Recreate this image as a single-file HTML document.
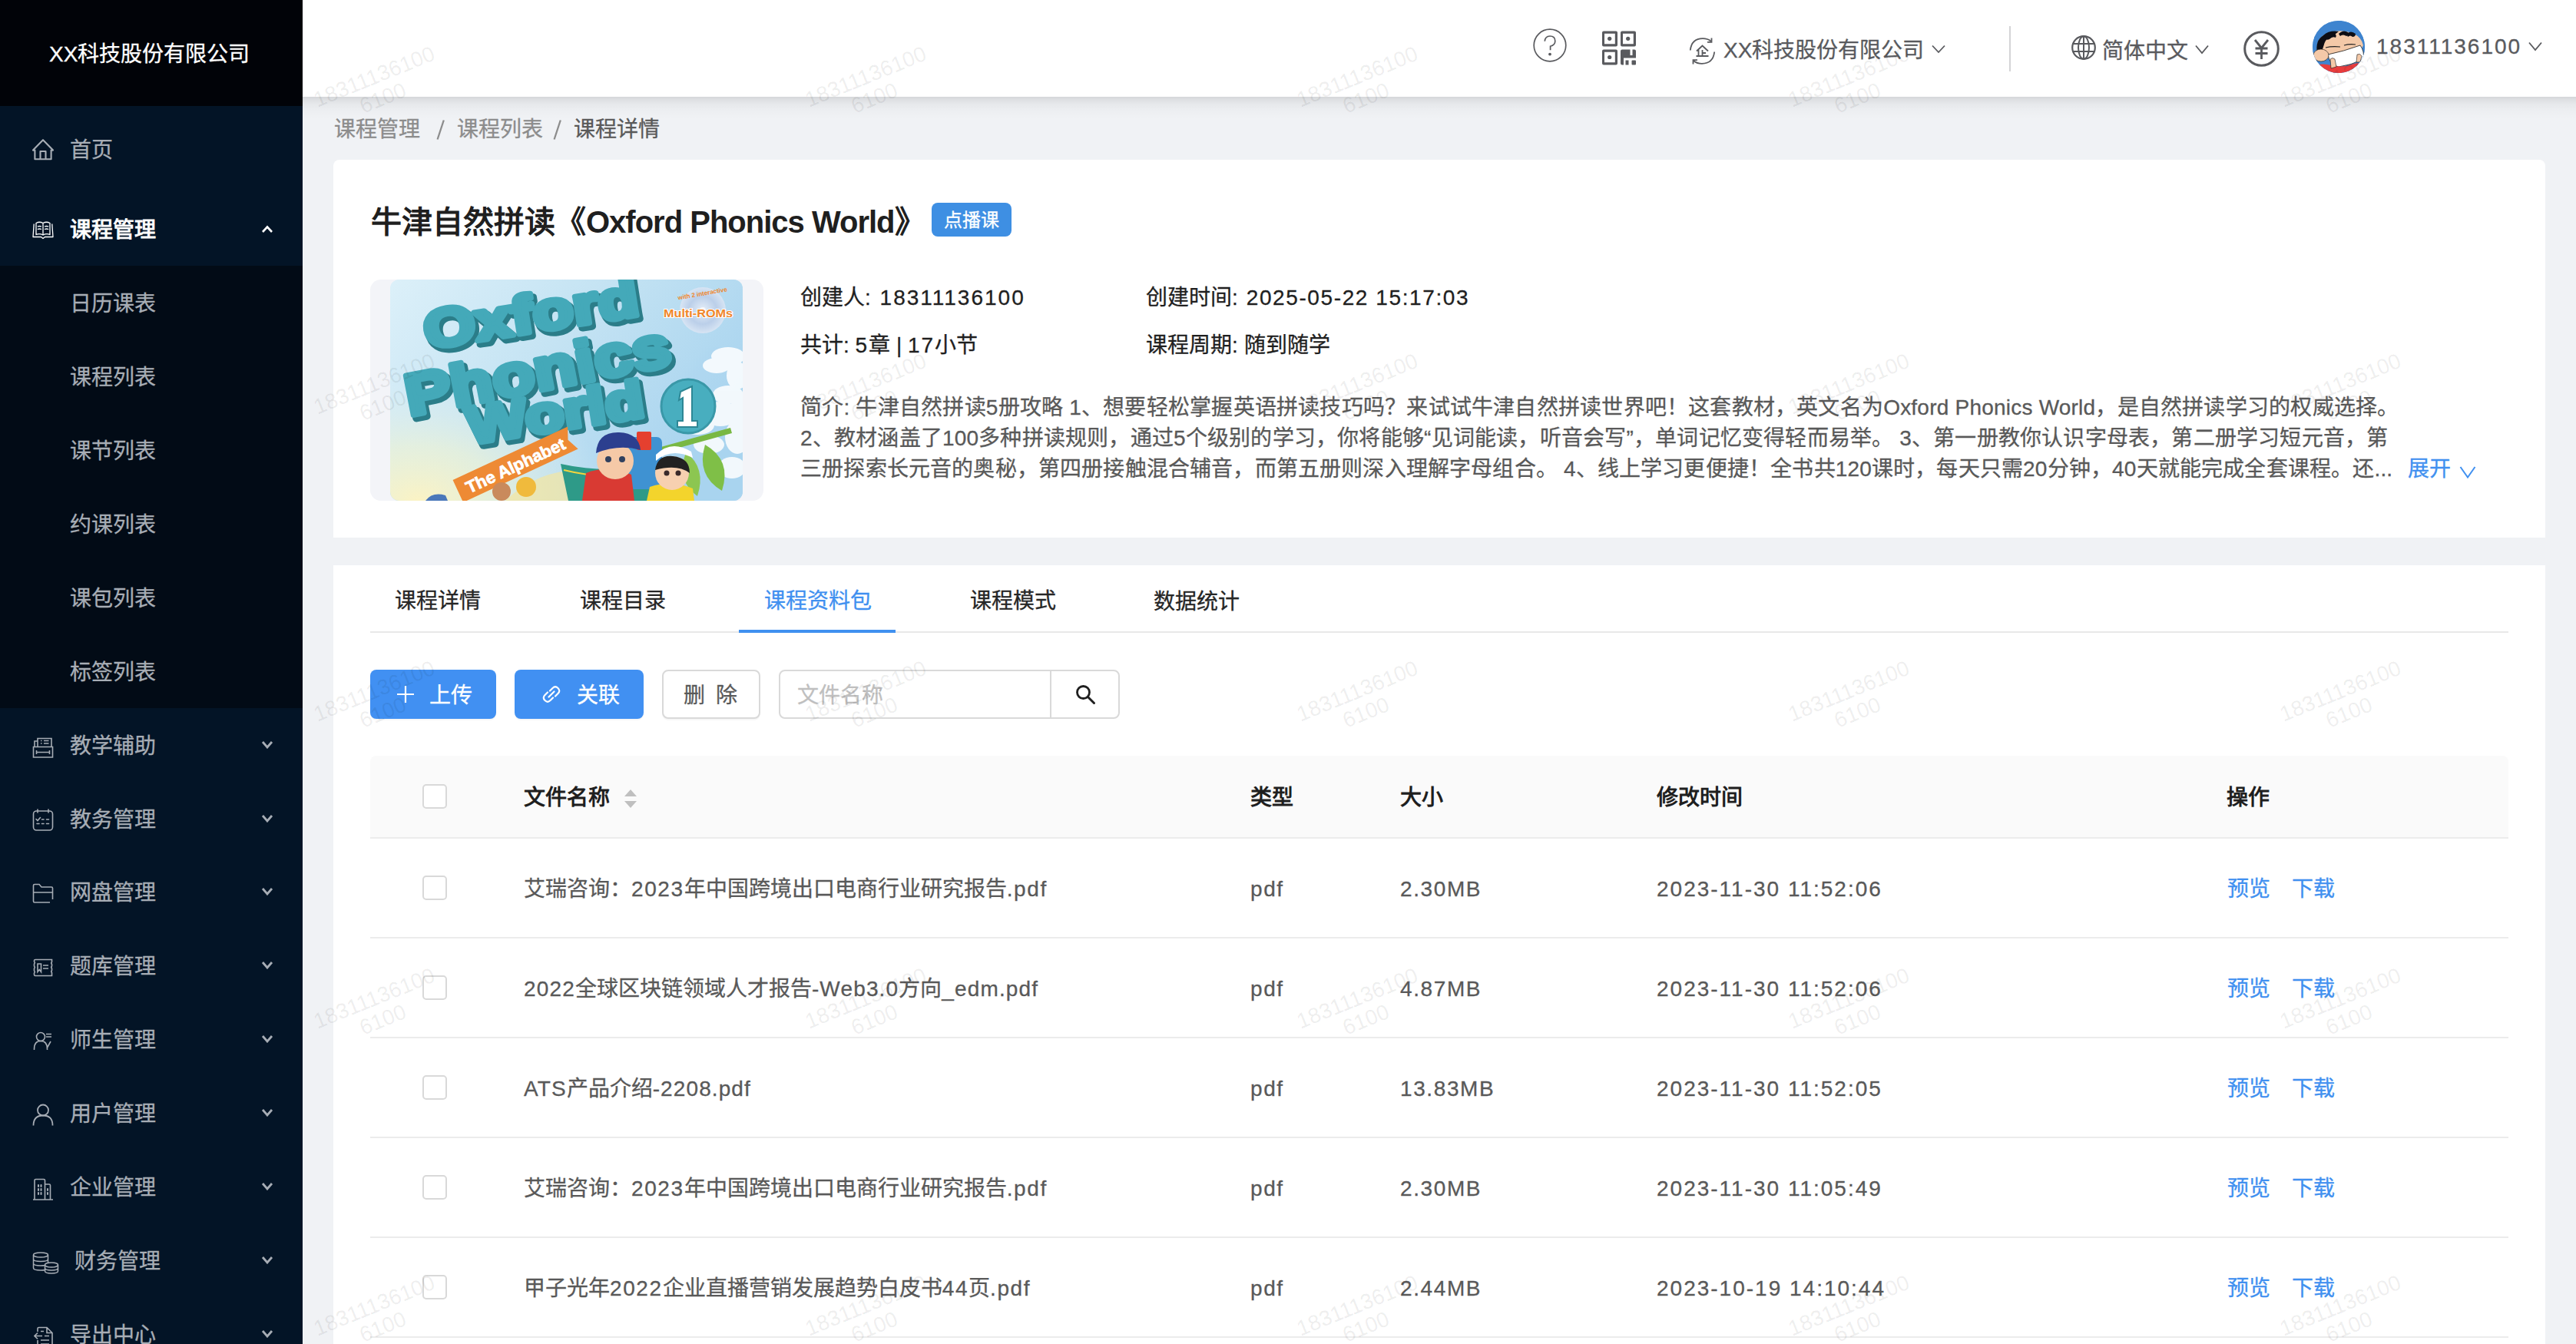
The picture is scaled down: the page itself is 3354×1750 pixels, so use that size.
<!DOCTYPE html>
<html lang="zh-CN"><head><meta charset="utf-8">
<style>
*{box-sizing:border-box;margin:0;padding:0}
html,body{width:3354px;height:1750px;overflow:hidden}
body{background:#f0f2f5;font-family:"Liberation Sans",sans-serif;position:relative;color:#1f1f1f;-webkit-text-stroke:0.3px currentColor}
.a{position:absolute;white-space:nowrap}
#side{left:0;top:0;width:394px;height:1750px;background:#031426}
#logo{left:0;top:0;width:394px;height:138px;background:#010308}
.mi{left:0;width:394px;height:96px;color:#a7adb5;font-size:28px}
.mi .t{position:absolute;left:91px;top:2px;line-height:96px}
.mi svg{position:absolute;left:42px;top:34px}
.mi .ch{position:absolute;left:340px;top:42px}
#sub{left:0;top:346px;width:394px;height:576px;background:#020b16}
#hdr{left:394px;top:0;width:2960px;height:126px;background:#fff}
#hsh{left:394px;top:126px;width:2960px;height:30px;background:linear-gradient(rgba(0,0,0,.115) 0px,rgba(0,0,0,.075) 4px,rgba(0,0,0,.045) 9px,rgba(0,0,0,.02) 16px,rgba(0,0,0,.006) 23px,rgba(0,0,0,0) 30px)}
.card{background:#fff;border-radius:10px}
.btn{border-radius:8px;font-size:28px;box-shadow:0 2px 0 rgba(0,0,0,.03)}
.cb{width:32px;height:32px;border:2px solid #d9d9d9;border-radius:5px;background:#fff}
.th{font-size:28px;line-height:40px;font-weight:bold;color:#1f1f1f;-webkit-text-stroke:0}
.wm{position:absolute;width:200px;height:60px;text-align:center;font-size:28px;line-height:30px;color:rgba(0,0,0,.075);transform:rotate(-22deg)}
.bc{font-size:28px;line-height:40px;color:#8c8c8c}
.n{letter-spacing:2px}
.dsc{font-size:28px;line-height:40px;color:#595959}
.m{letter-spacing:1.6px}
.td{font-size:28px;line-height:40px;color:#595959}
</style></head>
<body>
<div id="side" class="a">
  <div id="logo" class="a"><div class="a" style="left:64px;top:51px;font-size:28px;color:#fff;line-height:40px">XX科技股份有限公司</div></div>
  <div class="a mi" style="top:146px"><div class="t">首页</div>
    <svg width="28" height="28" viewBox="0 0 28 28" style="top:35px"><path d="M1 14.6L14 1.2L27 14.6H24.6V26.2H3.4V14.6Z M10.5 26V16H17.5V26" stroke="currentColor" fill="none" stroke-width="2.1" stroke-linejoin="round"/></svg>
  </div>
  <div class="a mi" style="top:250px;color:#fff"><div class="t" style="-webkit-text-stroke:1px #fff">课程管理</div>
    <svg width="28" height="26" viewBox="0 0 28 26" style="top:37px;left:42px"><path d="M2.2 4.5L1 21.5H11.5L14 23.5L16.5 21.5H27L25.8 4.5 M5 3.5Q9.5 1 14 3.5Q18.5 1 23 3.5V18.5Q18.5 16.5 14 19Q9.5 16.5 5 18.5Z M14 3.5V19 M6.8 8Q9.5 7 12 8 M6.8 11.5Q9.5 10.5 12 11.5 M16 8Q18.5 7 21.2 8 M16 11.5Q18.5 10.5 21.2 11.5" stroke="currentColor" fill="none" stroke-width="1.3" stroke-linejoin="round"/></svg>
    <svg class="ch" width="16" height="11" viewBox="0 0 16 11" style="top:43px"><path d="M2 9L8 2.5L14 9" stroke="currentColor" fill="none" stroke-width="2.6"/></svg>
  </div>
  <div id="sub" class="a">
    <div class="a mi" style="top:0"><div class="t">日历课表</div></div>
    <div class="a mi" style="top:96px"><div class="t">课程列表</div></div>
    <div class="a mi" style="top:192px"><div class="t">课节列表</div></div>
    <div class="a mi" style="top:288px"><div class="t">约课列表</div></div>
    <div class="a mi" style="top:384px"><div class="t">课包列表</div></div>
    <div class="a mi" style="top:480px"><div class="t">标签列表</div></div>
  </div>
  <div class="a mi" style="top:922px"><div class="t">教学辅助</div>
    <svg width="28" height="28" viewBox="0 0 28 28" style="top:37px"><path d="M1.5 13.5H26.5V27H1.5ZM3 13.5V6H7M7 13.5V2.5H25V13.5M5.5 20.5H22.5M5.5 18V23M22.5 18V23M11 5.5H12.5M11 9H12.5M15 5.5H21.5M15 9H21.5" stroke="currentColor" fill="none" stroke-width="1.6"/></svg>
    <svg class="ch" width="16" height="11" viewBox="0 0 16 11"><path d="M2 2L8 9L14 2" stroke="currentColor" fill="none" stroke-width="2.8"/></svg>
  </div>
  <div class="a mi" style="top:1018px"><div class="t">教务管理</div>
    <svg width="28" height="30" viewBox="0 0 28 30" style="top:35px"><rect x="1.5" y="3" width="25" height="25" rx="4" stroke="currentColor" fill="none" stroke-width="1.6"/><path d="M7 1V5M21 1V5M5 13.5L7 15.5L10.5 11.5M12.5 14H15M18.5 14H21.5M6 19.5H9M12.5 19.5H15M18.5 19.5H21.5" stroke="currentColor" fill="none" stroke-width="1.6" stroke-linecap="round"/></svg>
    <svg class="ch" width="16" height="11" viewBox="0 0 16 11"><path d="M2 2L8 9L14 2" stroke="currentColor" fill="none" stroke-width="2.8"/></svg>
  </div>
  <div class="a mi" style="top:1113px"><div class="t">网盘管理</div>
    <svg width="28" height="26" viewBox="0 0 28 26" style="top:37px"><path d="M23 25H3Q1.5 25 1.5 23.5V3Q1.5 1.5 3 1.5H9L12 5H25Q26.5 5 26.5 6.5V21M1.5 12H26.5" stroke="currentColor" fill="none" stroke-width="1.6"/></svg>
    <svg class="ch" width="16" height="11" viewBox="0 0 16 11"><path d="M2 2L8 9L14 2" stroke="currentColor" fill="none" stroke-width="2.8"/></svg>
  </div>
  <div class="a mi" style="top:1209px"><div class="t">题库管理</div>
    <svg width="26" height="24" viewBox="0 0 26 24" style="top:39px;left:43px"><path d="M3 1.5H24.5V4.5Q23 6 24.5 7.5V10Q23 11.5 24.5 13V15.5Q23 17 24.5 18.5V22.5H3Q1.5 22.5 1.5 21V19Q3 17.5 1.5 16V13Q3 11.5 1.5 10V7Q3 5.5 1.5 4V3Q1.5 1.5 3 1.5ZM6 7H10.5V17.5L8.3 14.5L6 17.5ZM13 9H20M13 13H20" stroke="currentColor" fill="none" stroke-width="1.6"/></svg>
    <svg class="ch" width="16" height="11" viewBox="0 0 16 11"><path d="M2 2L8 9L14 2" stroke="currentColor" fill="none" stroke-width="2.8"/></svg>
  </div>
  <div class="a mi" style="top:1305px"><div class="t">师生管理</div>
    <svg width="26" height="26" viewBox="0 0 26 26" style="top:38px;left:43px"><circle cx="10" cy="7" r="5.5" stroke="currentColor" fill="none" stroke-width="1.6"/><path d="M1.5 24V23Q1.5 12.5 10 12.5Q18.5 12.5 18.5 23V24M18.5 21L23 13M17 3.5H24M17 7H24" stroke="currentColor" fill="none" stroke-width="1.6"/></svg>
    <svg class="ch" width="16" height="11" viewBox="0 0 16 11"><path d="M2 2L8 9L14 2" stroke="currentColor" fill="none" stroke-width="2.8"/></svg>
  </div>
  <div class="a mi" style="top:1401px"><div class="t">用户管理</div>
    <svg width="28" height="30" viewBox="0 0 28 30" style="top:36px"><circle cx="14" cy="8.5" r="7" stroke="currentColor" fill="none" stroke-width="1.8"/><path d="M1.5 28.5Q1.5 15.5 14 15.5Q26.5 15.5 26.5 28.5" stroke="currentColor" fill="none" stroke-width="1.8"/></svg>
    <svg class="ch" width="16" height="11" viewBox="0 0 16 11"><path d="M2 2L8 9L14 2" stroke="currentColor" fill="none" stroke-width="2.8"/></svg>
  </div>
  <div class="a mi" style="top:1497px"><div class="t">企业管理</div>
    <svg width="28" height="30" viewBox="0 0 28 30" style="top:37px"><path d="M1 28H27M3 28V3Q3 1.5 4.5 1.5H15Q16.5 1.5 16.5 3V28M16.5 8H22Q23.5 8 23.5 9.5V28" stroke="currentColor" fill="none" stroke-width="1.6"/><path d="M8 9V11M11.5 9V11M8 14V16M11.5 14V16M8 19V21M11.5 19V21M20 14V16M20 19V21" stroke="currentColor" fill="none" stroke-width="2" stroke-linecap="round"/></svg>
    <svg class="ch" width="16" height="11" viewBox="0 0 16 11"><path d="M2 2L8 9L14 2" stroke="currentColor" fill="none" stroke-width="2.8"/></svg>
  </div>
  <div class="a mi" style="top:1593px"><div class="t" style="left:97px">财务管理</div>
    <svg width="35" height="29" viewBox="0 0 35 29" style="top:37px"><ellipse cx="11" cy="4" rx="9.5" ry="3" stroke="currentColor" fill="none" stroke-width="1.5"/><path d="M1.5 4V21Q1.5 24 11 24Q15 24 16.5 23.5M1.5 9.5Q1.5 12.5 11 12.5Q20.5 12.5 20.5 9.5M1.5 15Q1.5 18 11 18Q15 18 16.5 17.5M20.5 4V15" stroke="currentColor" fill="none" stroke-width="1.5"/><ellipse cx="25" cy="17" rx="8.5" ry="3" stroke="currentColor" fill="none" stroke-width="1.5"/><path d="M16.5 17V25Q16.5 28 25 28Q33.5 28 33.5 25V17M16.5 21Q16.5 24 25 24Q33.5 24 33.5 21" stroke="currentColor" fill="none" stroke-width="1.5"/></svg>
    <svg class="ch" width="16" height="11" viewBox="0 0 16 11"><path d="M2 2L8 9L14 2" stroke="currentColor" fill="none" stroke-width="2.8"/></svg>
  </div>
  <div class="a mi" style="top:1689px"><div class="t">导出中心</div>
    <svg width="26" height="30" viewBox="0 0 26 30" style="top:38px;left:44px"><path d="M5 7V3Q5 1.5 6.5 1.5H17L24 8.5V28Q24 29.5 22.5 29.5H6.5Q5 29.5 5 28V18M17 1.5V8.5H24M1 12.5H11M5 8.5L1 12.5L5 16.5M9 6.5H13M14 12.5H20M9 18H20M9 23H20" stroke="currentColor" fill="none" stroke-width="1.6"/></svg>
    <svg class="ch" width="16" height="11" viewBox="0 0 16 11"><path d="M2 2L8 9L14 2" stroke="currentColor" fill="none" stroke-width="2.8"/></svg>
  </div>
</div>
<div id="hdr" class="a">
  <svg class="a" style="left:1602px;top:37px" width="44" height="44" viewBox="0 0 44 44"><circle cx="22" cy="22" r="20.8" stroke="#595a5e" fill="none" stroke-width="1.7"/><path d="M15.3 16.8Q15.8 10 22 10Q28.8 10 28.8 16.4Q28.8 21.6 22.6 23.2V28.2" stroke="#595a5e" fill="none" stroke-width="1.7"/><circle cx="22" cy="33.6" r="1.9" fill="#595a5e"/></svg>
  <svg class="a" style="left:1691px;top:40px" width="45" height="45" viewBox="0 0 45 45" fill="#595a5e"><path fill-rule="evenodd" d="M1 2.5Q1 0.5 3 0.5H19Q21 0.5 21 2.5V18.5Q21 20.5 19 20.5H3Q1 20.5 1 18.5ZM4 3.8V17.2H17.8V3.8Z"/><circle cx="10.7" cy="10.3" r="2.6"/><path fill-rule="evenodd" d="M25 2.5Q25 0.5 27 0.5H43Q45 0.5 45 2.5V18.5Q45 20.5 43 20.5H27Q25 20.5 25 18.5ZM28 3.8V17.2H41.8V3.8Z"/><circle cx="34.7" cy="10.3" r="2.6"/><path fill-rule="evenodd" d="M1 26.5Q1 24.5 3 24.5H19Q21 24.5 21 26.5V42.5Q21 44.5 19 44.5H3Q1 44.5 1 42.5ZM4 27.8V41.2H17.8V27.8Z"/><circle cx="10.7" cy="34.5" r="2.6"/><path d="M25 26.5Q25 24.5 27 24.5H37.5V32H40.5V24.5H43Q45 24.5 45 26.5V35.5H29V44.5H27Q25 44.5 25 42.5Z"/><rect x="31.5" y="38.5" width="4" height="6"/><rect x="39.5" y="38.5" width="5.5" height="6" rx="1"/></svg>
  <svg class="a" style="left:1805px;top:49px" width="35" height="35" viewBox="0 0 35 35"><path d="M28.5 4.5Q24.5 1.2 18 1.2Q3.5 1.2 1.8 16.5M29.5 0.5V5.8H24M6.5 30.5Q10.5 33.8 17 33.8Q31.5 33.8 33.2 18.5M5.5 34.5V29.2H11" stroke="#595a5e" fill="none" stroke-width="1.8"/><path d="M10 17.5L17.5 10.5L25 17.5M12.5 16V24M17.5 16V24M17.5 20H22M9.5 24H25.5" stroke="#595a5e" fill="none" stroke-width="1.8"/></svg>
  <div class="a" style="left:1850px;top:46px;font-size:28px;line-height:40px;color:#595a5e">XX科技股份有限公司</div>
  <svg class="a" style="left:2121px;top:58px" width="18" height="12" viewBox="0 0 18 12"><path d="M1 1.5L9 10L17 1.5" stroke="#595a5e" fill="none" stroke-width="1.8"/></svg>
  <div class="a" style="left:2222px;top:34px;width:2px;height:59px;background:#d4d4d6"></div>
  <svg class="a" style="left:2303px;top:46px" width="32" height="32" viewBox="0 0 32 32"><circle cx="16" cy="16" r="14.8" stroke="#595a5e" fill="none" stroke-width="2.2"/><ellipse cx="16" cy="16" rx="7" ry="14.8" stroke="#595a5e" fill="none" stroke-width="2"/><path d="M16 1V31M1.5 11H30.5M1.5 21H30.5" stroke="#595a5e" fill="none" stroke-width="2"/></svg>
  <div class="a" style="left:2343px;top:47px;font-size:28px;line-height:40px;color:#595a5e">简体中文</div>
  <svg class="a" style="left:2464px;top:58px" width="18" height="13" viewBox="0 0 18 13"><path d="M1 1.5L9 11L17 1.5" stroke="#595a5e" fill="none" stroke-width="1.8"/></svg>
  <svg class="a" style="left:2527px;top:40px" width="47" height="47" viewBox="0 0 47 47"><circle cx="23.5" cy="23.5" r="21.8" stroke="#595a5e" fill="none" stroke-width="3"/><path d="M15 12L23.5 22.5L32 12M23.5 22.5V37M15.5 23H31.5M15.5 29.5H31.5" stroke="#595a5e" fill="none" stroke-width="2.8"/></svg>
  <div class="a" style="left:2617px;top:27px;width:68px;height:68px;border-radius:50%;overflow:hidden;background:#3f86d0">
    <svg width="68" height="68" viewBox="0 0 68 68"><rect width="68" height="68" fill="#3e84cf"/>
<path d="M6 40Q4 22 20 16Q36 10 54 17Q64 22 66 32L60 44L10 50Z" fill="#f4c9a8"/>
<path d="M6 42Q3 26 14 19Q22 12 34 14Q30 18 24 20Q16 24 14 34Q12 40 10 46Z" fill="#0d0d14"/>
<path d="M16 22Q20 15 28 16Q32 18 30 22Q26 20 22 24Q18 26 16 22Z M34 17Q40 11 46 15Q48 19 44 20Q40 17 36 20Z M44 17Q50 12 56 17Q56 21 52 21Q49 18 46 21Z" fill="#0d0d14"/>
<path d="M17 35Q25 33 36 34M41 32Q48 30 56 31" stroke="#222" stroke-width="1.2" fill="none"/>
<path d="M20 44Q40 40 62 32Q68 40 66 50Q50 58 34 60Q22 58 20 44Z" fill="#fff" stroke="#1a1a1a" stroke-width="0.8"/>
<path d="M0 60Q10 54 24 58Q40 62 54 56Q62 54 68 58V68H0Z" fill="#e83c3c"/>
<ellipse cx="11" cy="45" rx="10" ry="8" fill="#f4c9a8" stroke="#1a1a1a" stroke-width="0.6"/>
<path d="M23 50Q26 47 29 50L31 60L24 62Z" fill="#f4c9a8" stroke="#1a1a1a" stroke-width="0.6"/>
<path d="M58 44Q62 42 64 46L62 54L57 54Z" fill="#f4c9a8" stroke="#1a1a1a" stroke-width="0.6"/>
</svg>
  </div>
  <div class="a" style="left:2700px;top:41px;font-size:28px;line-height:40px;color:#595a5e;letter-spacing:2px">18311136100</div>
  <svg class="a" style="left:2898px;top:54px" width="18" height="13" viewBox="0 0 18 13"><path d="M1 1.5L9 11L17 1.5" stroke="#595a5e" fill="none" stroke-width="1.8"/></svg>
</div>
<div class="a bc" style="left:435px;top:149px">课程管理</div><svg class="a" style="left:566px;top:154px" width="16" height="30" viewBox="0 0 16 30"><path d="M11.8 2.5L3.6 27.5" stroke="#8c8c8c" stroke-width="2.3"/></svg><div class="a bc" style="left:595px;top:149px">课程列表</div><svg class="a" style="left:718px;top:154px" width="16" height="30" viewBox="0 0 16 30"><path d="M11.8 2.5L3.6 27.5" stroke="#8c8c8c" stroke-width="2.3"/></svg><div class="a bc" style="left:747px;top:149px;color:#595959">课程详情</div>
<div class="a card" style="left:434px;top:208px;width:2880px;height:492px;border-radius:8px 8px 0 0">
  <div class="a" style="left:49px;top:53px;font-size:40px;line-height:56px;font-weight:bold;color:#1f1f1f;-webkit-text-stroke:0">牛津自然拼读《<span style="letter-spacing:-1px">Oxford Phonics World</span>》</div>
  <div class="a" style="left:779px;top:56px;width:104px;height:44px;border-radius:8px;background:#3e8fe3;color:#fff;font-size:24px;line-height:46px;text-align:center">点播课</div>
  <div class="a" style="left:48px;top:156px;width:512px;height:288px;border-radius:14px;background:#f3f4f8;overflow:hidden">
    <div class="a" style="left:26px;top:0;width:459px;height:288px;border-radius:12px;overflow:hidden;background:linear-gradient(160deg,#d8eef8 0%,#bfe0f2 45%,#a9d4ef 100%)"><svg width="459" height="288" viewBox="0 0 459 288" style="position:absolute;left:0;top:0">
 <defs>
  <linearGradient id="sky" x1="0" y1="0" x2="1" y2="0.5"><stop offset="0" stop-color="#dcf0f9"/><stop offset="0.5" stop-color="#c4e3f3"/><stop offset="1" stop-color="#a9d4ef"/></linearGradient>
  <radialGradient id="glow" cx="0.08" cy="1" r="0.55"><stop offset="0" stop-color="#fbf3c4" stop-opacity="1"/><stop offset="0.45" stop-color="#eef3d6" stop-opacity="0.7"/><stop offset="1" stop-color="#dff0f6" stop-opacity="0"/></radialGradient>
  <radialGradient id="cd" cx="0.5" cy="0.5" r="0.5"><stop offset="0" stop-color="#eef2fa"/><stop offset="0.6" stop-color="#bccde8"/><stop offset="1" stop-color="#dde6f4"/></radialGradient>
 </defs>
 <rect width="459" height="288" fill="url(#sky)"/>
 <rect width="459" height="288" fill="url(#glow)"/>
 <g fill="#fff" opacity="0.85">
  <ellipse cx="440" cy="100" rx="22" ry="12"/><ellipse cx="425" cy="112" rx="18" ry="10"/><ellipse cx="452" cy="125" rx="14" ry="18"/><ellipse cx="440" cy="150" rx="20" ry="12"/><ellipse cx="415" cy="215" rx="20" ry="12"/><ellipse cx="455" cy="170" rx="12" ry="20"/>
  <ellipse cx="400" cy="190" rx="22" ry="12"/><ellipse cx="430" cy="175" rx="24" ry="16"/><ellipse cx="452" cy="205" rx="16" ry="22"/><ellipse cx="445" cy="245" rx="18" ry="14"/>
 </g>
 <circle cx="407" cy="40" r="30" fill="url(#cd)" opacity="0.85"/><circle cx="407" cy="40" r="4" fill="#f4f6fb"/>
 <text x="356" y="49" font-family="Liberation Sans" font-weight="bold" font-size="15" fill="#f0862a" stroke="#fff" stroke-width="2" paint-order="stroke" textLength="90" lengthAdjust="spacingAndGlyphs">Multi-ROMs</text>
 <text x="374" y="22" font-family="Liberation Sans" font-weight="bold" font-size="8" fill="#f0862a" transform="rotate(-10 400 18)">with 2 interactive</text>
 <g font-family="Liberation Sans" font-weight="bold" stroke-linejoin="round">
  <g transform="rotate(-9 180 50)">
   <text x="46" y="74" font-size="70" fill="#2b7d89" stroke="#2b7d89" stroke-width="9" textLength="282" lengthAdjust="spacingAndGlyphs">Oxford</text>
   <text x="43" y="69" font-size="70" fill="#44a9b9" stroke="#44a9b9" stroke-width="7" textLength="282" lengthAdjust="spacingAndGlyphs">Oxford</text>
  </g>
  <g transform="rotate(-11 190 120)">
   <text x="20" y="150" font-size="76" fill="#2b7d89" stroke="#2b7d89" stroke-width="9" textLength="350" lengthAdjust="spacingAndGlyphs">Phonics</text>
   <text x="17" y="145" font-size="76" fill="#44a9b9" stroke="#44a9b9" stroke-width="7" textLength="350" lengthAdjust="spacingAndGlyphs">Phonics</text>
  </g>
  <g transform="rotate(-9 210 175)">
   <text x="102" y="202" font-size="68" fill="#2b7d89" stroke="#2b7d89" stroke-width="9" textLength="232" lengthAdjust="spacingAndGlyphs">World</text>
   <text x="99" y="197" font-size="68" fill="#44a9b9" stroke="#44a9b9" stroke-width="7" textLength="232" lengthAdjust="spacingAndGlyphs">World</text>
  </g>
 </g>
 <circle cx="388" cy="165" r="35" fill="#48aebf" stroke="#3a98a8" stroke-width="3"/>
 <path d="M378 146L393 139V184H400V192H374V184H381V154L376 157Z" fill="#fff" stroke="#2d8795" stroke-width="2"/>
 <path d="M150 288Q200 240 270 250L300 288Z" fill="#f4e6a0" opacity="0.7"/>
 <g transform="rotate(-25 160 240)">
  <path d="M80 226H245L238 242L245 258H80Z" fill="#ee8a34"/>
  <text x="92" y="251" font-family="Liberation Sans" font-weight="bold" font-size="22" fill="#fff" stroke="#fff" stroke-width="0.8" textLength="140" lengthAdjust="spacingAndGlyphs">The Alphabet</text>
 </g>
 <path d="M338 222L443 193L445 200L340 229Z" fill="#79b843"/>
 <path d="M410 215Q445 235 432 275Q398 255 410 215Z" fill="#7fbf47"/>
 <path d="M385 225Q412 245 400 282Q372 262 385 225Z" fill="#8cc651"/>
 <path d="M222 240Q290 255 350 238L345 288H232Z" fill="#2e9a88"/>
 <path d="M226 248Q290 264 348 246" stroke="#f2d43e" stroke-width="2" fill="none"/>
 <rect x="309" y="205" width="45" height="68" rx="7" fill="#3f92d2"/>
 <rect x="321" y="198" width="19" height="24" rx="2" fill="#e5402f"/>
 <path d="M255 252Q285 240 314 254L318 288H250Z" fill="#d93a33"/>
 <circle cx="293" cy="236" r="24" fill="#f5c9a7"/>
 <path d="M268 226Q270 198 298 199Q324 200 326 222Q298 214 268 226Z" fill="#2c3f8f"/>
 <circle cx="284" cy="234" r="4" fill="#30405e"/><circle cx="302" cy="234" r="4" fill="#30405e"/>
 <path d="M338 270Q366 260 394 272L396 288H334Z" fill="#f3d42c"/>
 <circle cx="367" cy="252" r="22" fill="#f7d0b0"/>
 <path d="M345 248Q348 228 368 230Q390 232 390 252Q374 240 345 248Z" fill="#222"/>
 <path d="M346 236Q366 218 394 232L392 224Q366 208 346 228Z" fill="#fff"/>
 <circle cx="360" cy="252" r="3.5" fill="#3a2a2a"/><circle cx="375" cy="252" r="3.5" fill="#3a2a2a"/>
 <circle cx="145" cy="276" r="12" fill="#c98a5c"/><circle cx="177" cy="270" r="13" fill="#f0ba3c"/>
 <path d="M46 288Q55 276 72 281L75 288Z" fill="#4b78ba"/>
</svg></div>
  </div>
  <div class="a" style="left:608px;top:160px;font-size:28px;line-height:40px;color:#1f1f1f">创建人<span class="n">: 18311136100</span></div>
  <div class="a" style="left:1058px;top:160px;font-size:28px;line-height:40px;color:#1f1f1f">创建时间<span class="n" style="letter-spacing:1.6px">: 2025-05-22 15:17:03</span></div>
  <div class="a" style="left:608px;top:222px;font-size:28px;line-height:40px;color:#1f1f1f">共计: <span class="n">5</span>章 | <span class="n">17</span>小节</div>
  <div class="a" style="left:1058px;top:222px;font-size:28px;line-height:40px;color:#1f1f1f">课程周期: 随到随学</div>
  <div class="a dsc" style="left:608px;top:303px;letter-spacing:0.22px">简介: 牛津自然拼读5册攻略 1、想要轻松掌握英语拼读技巧吗？来试试牛津自然拼读世界吧！这套教材，英文名为Oxford Phonics World，是自然拼读学习的权威选择。</div>
  <div class="a dsc" style="left:608px;top:343px;letter-spacing:0.2px">2、教材涵盖了100多种拼读规则，通过5个级别的学习，你将能够“见词能读，听音会写”，单词记忆变得轻而易举。 3、第一册教你认识字母表，第二册学习短元音，第</div>
  <div class="a dsc" style="left:608px;top:383px;letter-spacing:0.17px">三册探索长元音的奥秘，第四册接触混合辅音，而第五册则深入理解字母组合。 4、线上学习更便捷！全书共120课时，每天只需20分钟，40天就能完成全套课程。还...</div>
  <div class="a dsc" style="left:2701px;top:383px;color:#4090f0">展开</div>
  <svg class="a" style="left:2768px;top:398px" width="22" height="18" viewBox="0 0 22 18"><path d="M1.5 2L11 15.5L20.5 2" stroke="#4090f0" fill="none" stroke-width="2"/></svg>
</div>
<div class="a card" style="left:434px;top:736px;width:2880px;height:1100px;border-radius:0">
  <div class="a" style="left:48px;top:86px;width:2784px;height:2px;background:#e8e8e8"></div>
  <div class="a" style="left:80px;top:27px;font-size:28px;line-height:40px;color:#262626">课程详情</div>
  <div class="a" style="left:321px;top:27px;font-size:28px;line-height:40px;color:#262626">课程目录</div>
  <div class="a" style="left:561px;top:27px;font-size:28px;line-height:40px;color:#4090f0">课程资料包</div>
  <div class="a" style="left:829px;top:27px;font-size:28px;line-height:40px;color:#262626">课程模式</div>
  <div class="a" style="left:1068px;top:28px;font-size:28px;line-height:40px;color:#262626">数据统计</div>
  <div class="a" style="left:528px;top:84px;width:204px;height:4px;background:#4090f0"></div>
  <div class="a btn" style="left:48px;top:136px;width:164px;height:64px;background:#4190f2;color:#fff">
    <svg class="a" style="left:35px;top:21px" width="22" height="22" viewBox="0 0 22 22"><path d="M11 0V22M0 11H22" stroke="#fff" stroke-width="2.2"/></svg>
    <div class="a" style="left:77px;top:14px;line-height:40px">上传</div></div>
  <div class="a btn" style="left:236px;top:136px;width:168px;height:64px;background:#4190f2;color:#fff">
    <svg class="a" style="left:35px;top:19px" width="26" height="26" viewBox="0 0 26 26"><path d="M11 8.5L14.5 5Q18 1.5 21.5 5Q25 8.5 21.5 12L18 15.5M15 17.5L11.5 21Q8 24.5 4.5 21Q1 17.5 4.5 14L8 10.5M9.5 16.5L16.5 9.5" stroke="#fff" fill="none" stroke-width="2.2" stroke-linecap="round"/></svg>
    <div class="a" style="left:81px;top:14px;line-height:40px">关联</div></div>
  <div class="a btn" style="left:428px;top:136px;width:128px;height:64px;background:#fff;border:2px solid #d9d9d9;color:#595959">
    <div class="a" style="left:26px;top:12px;line-height:40px;letter-spacing:14px">删除</div></div>
  <div class="a" style="left:580px;top:136px;width:444px;height:64px;background:#fff;border:2px solid #d9d9d9;border-radius:8px">
    <div class="a" style="left:22px;top:12px;line-height:40px;font-size:28px;color:#bfbfbf">文件名称</div>
    <div class="a" style="left:351px;top:0;width:2px;height:60px;background:#d9d9d9"></div>
    <svg class="a" style="left:384px;top:17px" width="27" height="27" viewBox="0 0 27 27"><circle cx="10.5" cy="10.5" r="8" stroke="#1f1f1f" fill="none" stroke-width="2.8"/><path d="M16.5 16.5L24.5 24.5" stroke="#1f1f1f" stroke-width="3" stroke-linecap="round"/></svg>
  </div>
  <div class="a" style="left:48px;top:248px;width:2784px;height:108px;background:#fafafa;border-radius:8px 8px 0 0;border-bottom:2px solid #ececec"></div>
  <div class="a cb" style="left:116px;top:285px"></div>
  <div class="a th" style="left:248px;top:283px">文件名称</div>
  <svg class="a" style="left:379px;top:292px" width="16" height="25" viewBox="0 0 16 25"><path d="M8 0L16 9H0Z M0 15H16L8 24Z" fill="#bfbfbf"/></svg>
  <div class="a th" style="left:1194px;top:283px">类型</div>
  <div class="a th" style="left:1389px;top:283px">大小</div>
  <div class="a th" style="left:1723px;top:283px">修改时间</div>
  <div class="a th" style="left:2465px;top:283px">操作</div>
  <div class="a" style="left:48px;top:484px;width:2784px;height:2px;background:#ececec"></div>
  <div class="a cb" style="left:116px;top:404px"></div>
  <div class="a td" style="left:248px;top:402px">艾瑞咨询：<span class="m">2023</span>年中国跨境出口电商行业研究报告<span class="m">.pdf</span></div>
  <div class="a td" style="left:1194px;top:402px;letter-spacing:1.6px">pdf</div>
  <div class="a td" style="left:1389px;top:402px;letter-spacing:1.6px">2.30MB</div>
  <div class="a td" style="left:1723px;top:402px;letter-spacing:2px">2023-11-30 11:52:06</div>
  <div class="a td" style="left:2466px;top:402px;color:#4090f0">预览</div>
  <div class="a td" style="left:2550px;top:402px;color:#4090f0">下载</div>
  <div class="a" style="left:48px;top:614px;width:2784px;height:2px;background:#ececec"></div>
  <div class="a cb" style="left:116px;top:534px"></div>
  <div class="a td" style="left:248px;top:532px"><span class="m" style="letter-spacing:1.15px">2022</span>全球区块链领域人才报告<span class="m" style="letter-spacing:1.15px">-Web3.0</span>方向<span class="m" style="letter-spacing:1.15px">_edm.pdf</span></div>
  <div class="a td" style="left:1194px;top:532px;letter-spacing:1.6px">pdf</div>
  <div class="a td" style="left:1389px;top:532px;letter-spacing:1.6px">4.87MB</div>
  <div class="a td" style="left:1723px;top:532px;letter-spacing:2px">2023-11-30 11:52:06</div>
  <div class="a td" style="left:2466px;top:532px;color:#4090f0">预览</div>
  <div class="a td" style="left:2550px;top:532px;color:#4090f0">下载</div>
  <div class="a" style="left:48px;top:744px;width:2784px;height:2px;background:#ececec"></div>
  <div class="a cb" style="left:116px;top:664px"></div>
  <div class="a td" style="left:248px;top:662px"><span class="m" style="letter-spacing:1.1px">ATS</span>产品介绍<span class="m" style="letter-spacing:1.1px">-2208.pdf</span></div>
  <div class="a td" style="left:1194px;top:662px;letter-spacing:1.6px">pdf</div>
  <div class="a td" style="left:1389px;top:662px;letter-spacing:1.6px">13.83MB</div>
  <div class="a td" style="left:1723px;top:662px;letter-spacing:2px">2023-11-30 11:52:05</div>
  <div class="a td" style="left:2466px;top:662px;color:#4090f0">预览</div>
  <div class="a td" style="left:2550px;top:662px;color:#4090f0">下载</div>
  <div class="a" style="left:48px;top:874px;width:2784px;height:2px;background:#ececec"></div>
  <div class="a cb" style="left:116px;top:794px"></div>
  <div class="a td" style="left:248px;top:792px">艾瑞咨询：<span class="m">2023</span>年中国跨境出口电商行业研究报告<span class="m">.pdf</span></div>
  <div class="a td" style="left:1194px;top:792px;letter-spacing:1.6px">pdf</div>
  <div class="a td" style="left:1389px;top:792px;letter-spacing:1.6px">2.30MB</div>
  <div class="a td" style="left:1723px;top:792px;letter-spacing:2px">2023-11-30 11:05:49</div>
  <div class="a td" style="left:2466px;top:792px;color:#4090f0">预览</div>
  <div class="a td" style="left:2550px;top:792px;color:#4090f0">下载</div>
  <div class="a" style="left:48px;top:1004px;width:2784px;height:2px;background:#ececec"></div>
  <div class="a cb" style="left:116px;top:924px"></div>
  <div class="a td" style="left:248px;top:922px">甲子光年<span class="m">2022</span>企业直播营销发展趋势白皮书<span class="m">44</span>页<span class="m">.pdf</span></div>
  <div class="a td" style="left:1194px;top:922px;letter-spacing:1.6px">pdf</div>
  <div class="a td" style="left:1389px;top:922px;letter-spacing:1.6px">2.44MB</div>
  <div class="a td" style="left:1723px;top:922px;letter-spacing:2px">2023-10-19 14:10:44</div>
  <div class="a td" style="left:2466px;top:922px;color:#4090f0">预览</div>
  <div class="a td" style="left:2550px;top:922px;color:#4090f0">下载</div>
</div>
<div id="hsh" class="a"></div>
<div class="a" style="left:0;top:0;width:3354px;height:1750px;pointer-events:none;overflow:hidden"><div class="wm" style="left:393px;top:84px">18311136100<br>6100</div><div class="wm" style="left:1033px;top:84px">18311136100<br>6100</div><div class="wm" style="left:1673px;top:84px">18311136100<br>6100</div><div class="wm" style="left:2313px;top:84px">18311136100<br>6100</div><div class="wm" style="left:2953px;top:84px">18311136100<br>6100</div><div class="wm" style="left:393px;top:484px">18311136100<br>6100</div><div class="wm" style="left:1033px;top:484px">18311136100<br>6100</div><div class="wm" style="left:1673px;top:484px">18311136100<br>6100</div><div class="wm" style="left:2313px;top:484px">18311136100<br>6100</div><div class="wm" style="left:2953px;top:484px">18311136100<br>6100</div><div class="wm" style="left:393px;top:884px">18311136100<br>6100</div><div class="wm" style="left:1033px;top:884px">18311136100<br>6100</div><div class="wm" style="left:1673px;top:884px">18311136100<br>6100</div><div class="wm" style="left:2313px;top:884px">18311136100<br>6100</div><div class="wm" style="left:2953px;top:884px">18311136100<br>6100</div><div class="wm" style="left:393px;top:1284px">18311136100<br>6100</div><div class="wm" style="left:1033px;top:1284px">18311136100<br>6100</div><div class="wm" style="left:1673px;top:1284px">18311136100<br>6100</div><div class="wm" style="left:2313px;top:1284px">18311136100<br>6100</div><div class="wm" style="left:2953px;top:1284px">18311136100<br>6100</div><div class="wm" style="left:393px;top:1684px">18311136100<br>6100</div><div class="wm" style="left:1033px;top:1684px">18311136100<br>6100</div><div class="wm" style="left:1673px;top:1684px">18311136100<br>6100</div><div class="wm" style="left:2313px;top:1684px">18311136100<br>6100</div><div class="wm" style="left:2953px;top:1684px">18311136100<br>6100</div></div>
</body></html>
